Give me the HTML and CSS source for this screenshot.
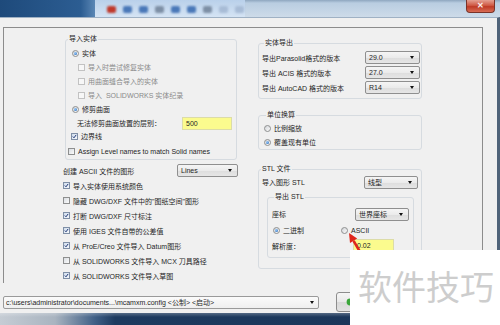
FILE: index.html
```html
<!DOCTYPE html>
<html lang="zh-CN">
<head>
    <meta charset="UTF-8">
    <meta name="viewport" content="width=device-width, initial-scale=1.0">
    <title>转换器设置</title>
    <link rel="stylesheet" href="styles.css">
</head>
<body>
    <div class="window">
        <!-- 标题栏 -->
        <div class="titlebar">
            <div class="tb-dark"></div>
            <div class="tb-tools">
                <span class="tb-icon red"></span>
                <span class="tb-icon blue"></span>
                <span class="tb-icon blue"></span>
                <span class="tb-icon grey"></span>
                <span class="tb-icon blue"></span>
                <span class="tb-icon blue"></span>
                <span class="tb-icon grey"></span>
                <span class="tb-icon light"></span>
                <span class="tb-icon light"></span>
            </div>
            <div class="tb-close">&#x2715;</div>
        </div>

        <div class="dialog">
            <div class="panel">
                <!-- 左栏 -->
                <div class="col-left">
                    <div class="group g-import">
                        <div class="group-title">导入实体</div>
                        <div class="row r-solid"><span class="rb on"></span>实体</div>
                        <div class="row sub disabled"><span class="cb"></span>导入时尝试修复实体</div>
                        <div class="row sub disabled"><span class="cb"></span>用曲面缝合导入的实体</div>
                        <div class="row sub disabled"><span class="cb"></span>导入&nbsp;&nbsp;SOLIDWORKS 实体纪录</div>
                        <div class="row r-solid"><span class="rb on"></span>修剪曲面</div>
                        <div class="row r-level">
                            <span class="level-label">无法修剪曲面放置的层别：</span>
                            <span class="input">500</span>
                        </div>
                        <div class="row r-edge"><span class="cb on"><svg viewBox="0 0 7 7"><path d="M1.2 3.6 L2.8 5.3 L5.8 1.3"/></svg></span>边界线</div>
                        <div class="row r-assign"><span class="cb"></span>Assign Level names to match Solid names</div>
                    </div>

                    <div class="row r-ascii">
                        <span>创建 ASCII 文件的图形</span>
                        <span class="select s-lines">Lines</span>
                    </div>

                    <div class="opts">
                        <div class="row"><span class="cb on"><svg viewBox="0 0 7 7"><path d="M1.2 3.6 L2.8 5.3 L5.8 1.3"/></svg></span>导入实体使用系统颜色</div>
                        <div class="row"><span class="cb"></span>隐藏 DWG/DXF 文件中的"图纸空间"图形</div>
                        <div class="row"><span class="cb on"><svg viewBox="0 0 7 7"><path d="M1.2 3.6 L2.8 5.3 L5.8 1.3"/></svg></span>打断 DWG/DXF 尺寸标注</div>
                        <div class="row"><span class="cb on"><svg viewBox="0 0 7 7"><path d="M1.2 3.6 L2.8 5.3 L5.8 1.3"/></svg></span>使用 IGES 文件自带的公差值</div>
                        <div class="row"><span class="cb on"><svg viewBox="0 0 7 7"><path d="M1.2 3.6 L2.8 5.3 L5.8 1.3"/></svg></span>从 ProE/Creo 文件导入 Datum图形</div>
                        <div class="row"><span class="cb"></span>从 SOLIDWORKS 文件导入 MCX 刀具路径</div>
                        <div class="row"><span class="cb on"><svg viewBox="0 0 7 7"><path d="M1.2 3.6 L2.8 5.3 L5.8 1.3"/></svg></span>从 SOLIDWORKS 文件导入草图</div>
                    </div>
                </div>

                <!-- 右栏 -->
                <div class="col-right">
                    <div class="group g-export">
                        <div class="group-title">实体导出</div>
                        <div class="row"><span>导出Parasolid格式的版本</span><span class="select">29.0</span></div>
                        <div class="row"><span>导出 ACIS 格式的版本</span><span class="select">27.0</span></div>
                        <div class="row"><span>导出 AutoCAD 格式的版本</span><span class="select">R14</span></div>
                    </div>

                    <div class="group g-units">
                        <div class="group-title">单位换算</div>
                        <div class="row"><span class="rb"></span>比例缩放</div>
                        <div class="row"><span class="rb on"></span>覆盖现有单位</div>
                    </div>

                    <div class="group g-stl">
                        <div class="group-title">STL 文件</div>
                        <div class="row r-stl"><span>导入图形 STL</span><span class="select">线型</span></div>

                        <div class="group g-stl-out">
                            <div class="group-title">导出 STL</div>
                            <div class="row r-coord"><span>座标</span><span class="select">世界座标</span></div>
                            <div class="row r-format">
                                <span class="opt"><span class="rb on"></span>二进制</span>
                                <span class="opt"><span class="rb"></span>ASCII</span>
                            </div>
                            <div class="row r-res">
                                <span class="res-label">解析度：</span>
                                <span class="input">0.02</span>
                            </div>
                        </div>
                    </div>
                </div>
            </div>

            <div class="footer">
                <span class="path-combo">c:\users\administrator\documents...\mcamxm.config &lt;公制&gt; &lt;启动&gt;</span>
                <span class="btn-ok">
                    <svg viewBox="0 0 8 8"><circle cx="4" cy="4" r="3.4"/></svg>
                </span>
            </div>
        </div>

        <div class="frame-bottom"></div>
    </div>

    <!-- 红色箭头标注 -->
    <svg class="pointer" viewBox="0 0 20 24">
        <path class="shaft" d="M9.6 12.8 L15.5 23"/>
        <path class="head" d="M5 5 L13.2 10.6 L6 15 Z"/>
    </svg>

    <div class="watermark">软件技巧</div>
</body>
</html>
```

FILE: styles.css
```css
/* 重置 */
* {
    margin: 0;
    padding: 0;
    box-sizing: border-box;
}

body {
    width: 500px;
    height: 325px;
    overflow: hidden;
    position: relative;
    font-family: "Liberation Sans", "Noto Sans CJK SC", sans-serif;
    font-size: 7px;
    color: #1e1e1e;
    background: #f0f0f0;
}

.window {
    display: flex;
    flex-direction: column;
    height: 325px;
}

/* 标题栏 */
.titlebar {
    height: 17px;
    display: flex;
    background: linear-gradient(#8ea6bf, #b9cde1 3px, #cddbe9);
}

.tb-dark {
    width: 95px;
    background: linear-gradient(90deg, #1e4a7b, #2c5d92 85%, #5b87b5);
}

.tb-tools {
    width: 150px;
    display: flex;
    align-items: center;
    gap: 7px;
    padding: 2px 0 0 12px;
    background: linear-gradient(#b9d0ea, #d5e4f4);
}

.tb-icon {
    width: 9px;
    height: 7px;
    border-radius: 2px;
    filter: blur(1.2px);
}

.tb-icon.red { background: #c0392b; }
.tb-icon.blue { background: #4a78b8; }
.tb-icon.grey { background: #7d8fa5; }
.tb-icon.light { background: #a8bcd6; }

.tb-close {
    margin-left: auto;
    margin-right: 5px;
    width: 29px;
    height: 13px;
    border: 1px solid #7a3328;
    border-top: none;
    border-radius: 0 0 4px 4px;
    background: linear-gradient(#e4a092, #cf5a45 45%, #bf3b26 55%, #d86c55);
    color: #fbeeee;
    font-size: 8px;
    font-weight: bold;
    line-height: 12px;
    text-align: center;
}

/* 对话框主体 */
.dialog {
    flex: 1;
    display: flex;
    flex-direction: column;
    border-top: 1px solid #9fb1c4;
    border-right: 3px solid #4f6379;
    padding: 9px 14px 0 3px;
    background: #f0f0f0;
}

.panel {
    height: 256px;
    display: flex;
    gap: 18px;
    padding-left: 59px;
    border: 1px solid #8c8c8c;
    border-bottom: none;
}

.col-left {
    width: 177px;
    display: flex;
    flex-direction: column;
}

.col-right {
    width: 164px;
    display: flex;
    flex-direction: column;
}

/* 分组框 */
.group {
    border: 1px solid #d6dbe0;
    border-radius: 3px;
}

.group-title {
    width: fit-content;
    height: 10px;
    line-height: 10px;
    margin: -6px 0 0 2px;
    padding: 0 1px;
    background: #f0f0f0;
}

.row {
    display: flex;
    align-items: center;
    height: 14px;
    white-space: nowrap;
}

/* 复选框与单选框 */
.cb {
    width: 7px;
    height: 7px;
    flex: none;
    margin-right: 3px;
    border: 1px solid #8e8f8f;
    background: linear-gradient(135deg, #d9dde2, #fbfbfb);
}

.cb svg {
    display: block;
    width: 5px;
    height: 5px;
}

.cb svg path {
    fill: none;
    stroke: #1d3575;
    stroke-width: 1.4;
}

.cb.on {
    border-color: #7f8fa6;
    background: linear-gradient(135deg, #cfdcec, #f5f8fb);
}

.rb {
    width: 7px;
    height: 7px;
    flex: none;
    margin-right: 3px;
    border: 1px solid #8e8f8f;
    border-radius: 50%;
    background: linear-gradient(135deg, #d3d6da, #fafafa);
    display: flex;
    align-items: center;
    justify-content: center;
}

.rb.on::after {
    content: "";
    width: 3px;
    height: 3px;
    border-radius: 50%;
    background: radial-gradient(circle at 35% 35%, #9fd0ff, #1d5fb0);
}

.disabled {
    color: #8a8a8a;
}

.disabled .cb {
    border-color: #c2c2c2;
    background: #f7f7f7;
}

/* 下拉框 */
.select {
    width: 55px;
    height: 13px;
    margin-left: auto;
    display: flex;
    align-items: center;
    justify-content: space-between;
    padding: 0 5px 0 3px;
    border: 1px solid #8f8f8f;
    border-radius: 2px;
    background: linear-gradient(#f5f5f5, #ebebeb 50%, #dddddd 51%, #e6e6e6);
}

.select::after {
    content: "";
    border-left: 2.5px solid transparent;
    border-right: 2.5px solid transparent;
    border-top: 3px solid #111;
}

/* 黄色输入框 */
.input {
    height: 13px;
    line-height: 11px;
    padding: 0 3px;
    border: 1px solid #dcdca8;
    background: #fbfb8e;
}

/* 导入实体分组 */
.g-import {
    margin: 11px 3px 0 2px;
    padding-bottom: 1px;
}

.g-import .group-title {
    margin-bottom: 2px;
}

.r-solid { padding-left: 6px; }
.sub { padding-left: 12px; }

.r-level {
    padding-left: 11px;
    height: 14px;
}

.r-level .input {
    width: 50px;
    margin-left: auto;
    margin-right: 4px;
}

.r-edge {
    height: 12px;
    padding-left: 5px;
}

.r-assign {
    margin-top: 2px;
    padding-left: 2px;
}

.r-ascii {
    height: 15px;
    margin-top: 3px;
}

.s-lines {
    width: 61px;
    margin-right: 2px;
}

.opts .row {
    height: 15px;
}

/* 右栏分组 */
.g-export {
    margin-top: 15px;
    padding: 0 1px 3px 3px;
}

.g-export .group-title {
    margin-bottom: 2px;
}

.g-export .row {
    height: 15px;
}

.g-units {
    margin-top: 16px;
    padding-left: 5px;
}

.g-units .group-title {
    margin-bottom: 1px;
}

.g-stl {
    margin-top: 19px;
    padding-bottom: 10px;
}

.g-stl .group-title {
    margin-bottom: 1px;
}

.r-stl {
    padding: 0 3px 0 3px;
}

.r-stl .select {
    width: 54px;
}

.g-stl-out {
    margin: 8px 7px 0 8px;
    padding: 0 4px 4px 4px;
}

.g-stl-out .group-title {
    margin-bottom: 4px;
}

.r-coord {
    height: 16px;
}

.r-coord .select {
    width: 54px;
}

.r-format {
    height: 16px;
    padding-left: 1px;
}

.opt {
    display: flex;
    align-items: center;
    width: 73px;
}

.r-res {
    height: 15px;
}

.res-label {
    width: 81px;
}

.r-res .input {
    width: 41px;
}

/* 底部 */
.footer {
    height: 20px;
    margin-top: 9px;
    display: flex;
    align-items: center;
    gap: 17px;
}

.path-combo {
    width: 316px;
    height: 13px;
    display: flex;
    align-items: center;
    justify-content: space-between;
    padding: 0 4px 0 2px;
    border: 1px solid #9a9a9a;
    border-radius: 2px;
    background: linear-gradient(#fbfbfb, #efefef);
    white-space: nowrap;
}

.path-combo::after {
    content: "";
    border-left: 2.5px solid transparent;
    border-right: 2.5px solid transparent;
    border-top: 3px solid #111;
}

.btn-ok {
    width: 60px;
    height: 20px;
    display: flex;
    align-items: center;
    padding-left: 9px;
    border: 1px solid #8d8d8d;
    border-radius: 3px;
    background: linear-gradient(#f6f6f6, #e8e8e8 50%, #d8d8d8 51%, #e2e2e2);
}

.btn-ok svg {
    width: 8px;
    height: 8px;
}

.btn-ok circle {
    fill: #3aa63a;
}

.frame-bottom {
    height: 12px;
    background:
        linear-gradient(rgba(255, 255, 255, 0.25), rgba(255, 255, 255, 0) 4px),
        linear-gradient(90deg, #c5ccd4, #a9b4c0 55px, #3f5f86 95px, #1d3a5f 115px, #1a3457);
}

/* 标注与水印 */
.pointer {
    position: absolute;
    left: 344px;
    top: 228px;
    width: 20px;
    height: 24px;
}

.pointer .shaft {
    fill: none;
    stroke: #e0261c;
    stroke-width: 2.6;
}

.pointer .head {
    fill: #e0261c;
}

.watermark {
    position: absolute;
    left: 350px;
    top: 250px;
    width: 150px;
    height: 75px;
    padding: 19px 0 0 8px;
    background: #fff;
    color: #cdcdcd;
    font-family: "Noto Sans CJK SC", sans-serif;
    font-size: 34px;
    line-height: 34px;
    white-space: nowrap;
}
```
